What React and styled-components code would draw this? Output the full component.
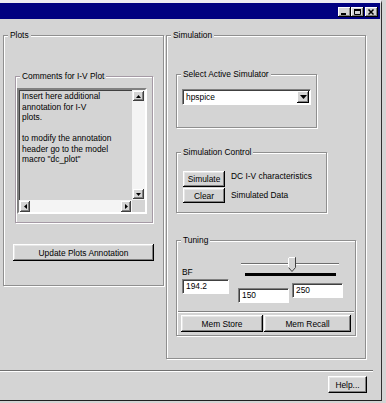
import React from 'react';
import styled, { createGlobalStyle } from 'styled-components';

const GlobalStyle = createGlobalStyle`
  html, body {
    margin: 0;
    padding: 0;
    background: #d4d4d4;
  }
`;

export default function App() {
  return (
    <>
      <GlobalStyle />
      <Window>
        <TitleBar>
          <CaptionButton aria-label="Minimize">
            <svg width="13" height="10" viewBox="0 0 13 10">
              <rect x="3" y="6" width="5" height="2" fill="#000" />
            </svg>
          </CaptionButton>
          <CaptionButton aria-label="Maximize">
            <svg width="13" height="10" viewBox="0 0 13 10">
              <path d="M3.5 2.5h6v5h-6z" fill="none" stroke="#000" />
              <rect x="3" y="2" width="7" height="2" fill="#000" />
            </svg>
          </CaptionButton>
          <CaptionButton aria-label="Close" $gap={1}>
            <svg width="13" height="10" viewBox="0 0 13 10">
              <path d="M3.5 2.5l5 5M8.5 2.5l-5 5" stroke="#000" strokeWidth="1.5" />
            </svg>
          </CaptionButton>
        </TitleBar>

        <Main>
          <Group $w={161} $h={256}>
            <Legend>Plots</Legend>
            <Group $w={138} $h={152} $top={30} $left={11} $tint>
              <Legend>Comments for I-V Plot</Legend>
              <TextBox>
                <Notes>
                  {'Insert here additional\nannotation for I-V\nplots.\n\nto modify the annotation\nheader go to the model\nmacro "dc_plot"'}
                </Notes>
                <VScroll>
                  <ArrowButton dir="up" />
                  <Track />
                  <ArrowButton dir="down" />
                </VScroll>
                <HScroll>
                  <ArrowButton dir="left" />
                  <Track />
                  <ArrowButton dir="right" />
                </HScroll>
                <Corner />
              </TextBox>
            </Group>
            <Button $w={141} $h={17} $top={21} $left={9}>Update Plots Annotation</Button>
          </Group>

          <Group $w={200} $h={329}>
            <Legend>Simulation</Legend>

            <Group $w={141} $h={59} $top={28} $left={9}>
              <Legend>Select Active Simulator</Legend>
              <SelectBox>
                <SelectValue>hpspice</SelectValue>
                <DropButton>
                  <svg width="7" height="4" viewBox="0 0 7 4">
                    <path d="M0 0h7L3.5 4z" fill="#000" />
                  </svg>
                </DropButton>
              </SelectBox>
            </Group>

            <Group $w={151} $h={66} $top={19} $left={9}>
              <Legend>Simulation Control</Legend>
              <ControlRow $top={13}>
                <Button $w={42} $h={16}>Simulate</Button>
                <ControlLabel>DC I-V characteristics</ControlLabel>
              </ControlRow>
              <ControlRow $top={1}>
                <Button $w={42} $h={15}>Clear</Button>
                <ControlLabel $top={2}>Simulated Data</ControlLabel>
              </ControlRow>
            </Group>

            <Group $w={180} $h={101} $top={22} $left={9}>
              <Legend>Tuning</Legend>
              <TuneBody>
                <BFColumn>
                  <FieldLabel>BF</FieldLabel>
                  <TextField $w={47}>194.2</TextField>
                </BFColumn>
                <RangeColumn>
                  <svg width="105" height="22" viewBox="0 0 105 22">
                    <rect x="3" y="8" width="98" height="1" fill="#6e6e6e" />
                    <rect x="3" y="9" width="98" height="1" fill="#ffffff" />
                    <rect x="7" y="18" width="91" height="3" fill="#000" />
                    <path d="M50.5 2.5h7v10l-3.5 4l-3.5-4z" fill="#d4d4d4" stroke="#404040" />
                    <path d="M50.5 12.5v-10h6.5" fill="none" stroke="#fff" />
                  </svg>
                  <RangeRow>
                    <TextField $w={51} $top={5}>150</TextField>
                    <TextField $w={51}>250</TextField>
                  </RangeRow>
                </RangeColumn>
              </TuneBody>
              <Separator />
              <MemRow>
                <Button $w={82} $h={17}>Mem Store</Button>
                <Button $w={87} $h={17}>Mem Recall</Button>
              </MemRow>
            </Group>
          </Group>
        </Main>

        <Divider />
        <Footer>
          <DefaultButton>Help...</DefaultButton>
        </Footer>
      </Window>
    </>
  );
}

function ArrowButton({ dir }) {
  const shapes = {
    up: 'M1 4h5L3.5 1z',
    down: 'M1 1h5L3.5 4z',
    left: 'M4 1v5L1 3.5z',
    right: 'M1 1v5L4 3.5z',
  };
  const vertical = dir === 'up' || dir === 'down';
  return (
    <ScrollButton $vertical={vertical}>
      <svg width={vertical ? 7 : 5} height={vertical ? 5 : 7}>
        <path d={shapes[dir]} fill="#000" />
      </svg>
    </ScrollButton>
  );
}

// Styled Components
const Window = styled.div`
  box-sizing: border-box;
  width: 382px;
  height: 401px;
  display: flex;
  flex-direction: column;
  background: #d4d4d4;
  border-top: 3px solid #ecebf1;
  border-right: 1px solid #303030;
  border-bottom: 1px solid #202020;
  font-family: "Liberation Sans", Arial, sans-serif;
  font-size: 8.4px;
  color: #000;
`;

const TitleBar = styled.div`
  box-sizing: border-box;
  width: 380px;
  height: 16px;
  flex: 0 0 16px;
  display: flex;
  justify-content: flex-end;
  align-items: flex-start;
  padding: 4px 2px 0 0;
  background: #000080;
`;

const CaptionButton = styled.div`
  width: 13px;
  height: 10px;
  margin-left: ${p => p.$gap || 0}px;
  background: #d4d4d4;
  box-shadow: inset -1px -1px 0 #000, inset 1px 1px 0 #fff, inset -2px -2px 0 #808080;
  svg {
    display: block;
  }
`;

const Main = styled.div`
  box-sizing: border-box;
  height: 351px;
  flex: 0 0 351px;
  display: flex;
  align-items: flex-start;
  gap: 2px;
  padding: 11px 0 0 3px;
`;

const Group = styled.fieldset`
  box-sizing: border-box;
  width: ${p => p.$w}px;
  height: ${p => p.$h}px;
  min-width: 0;
  margin: ${p => p.$top || 0}px 0 0 ${p => p.$left || 0}px;
  padding: 0;
  border: 1px solid ${p => (p.$tint ? '#a59aa5' : '#8f8f8f')};
  box-shadow: inset 1px 1px 0 #fff, 1px 1px 0 #fff;
`;

const Legend = styled.legend`
  margin-left: 4px;
  padding: 0 2px;
  line-height: 11px;
  background: #d4d4d4;
`;

const TextBox = styled.div`
  box-sizing: border-box;
  width: 130px;
  height: 126px;
  margin: 6px 0 0 1px;
  display: grid;
  grid-template-columns: 1fr 13px;
  grid-template-rows: 1fr 12px;
  border: 2px solid;
  border-color: #808080 #fff #fff #808080;
  box-shadow: inset 1px 1px 0 #404040, inset -1px -1px 0 #d4d4d4;
`;

const Notes = styled.div`
  padding: 1px 2px 0 3px;
  line-height: 10.5px;
  white-space: pre-line;
  overflow: hidden;
`;

const VScroll = styled.div`
  display: flex;
  flex-direction: column;
  align-items: center;
  background: #f4f4f4;
  padding: 1px 0 1px;
`;

const HScroll = styled.div`
  display: flex;
  align-items: center;
  background: #f4f4f4;
  padding: 0 1px 0 1px;
`;

const Track = styled.div`
  flex: 1;
`;

const Corner = styled.div`
  background: #d4d4d4;
`;

const ScrollButton = styled.div`
  box-sizing: border-box;
  width: ${p => (p.$vertical ? 11 : 10)}px;
  height: ${p => (p.$vertical ? 10 : 11)}px;
  display: flex;
  align-items: center;
  justify-content: center;
  background: #d4d4d4;
  box-shadow: inset -1px -1px 0 #404040, inset 1px 1px 0 #fff, inset -2px -2px 0 #808080;
  svg {
    display: block;
  }
`;

const Button = styled.div`
  box-sizing: border-box;
  width: ${p => p.$w}px;
  height: ${p => p.$h}px;
  margin: ${p => p.$top || 0}px 0 0 ${p => p.$left || 0}px;
  flex: 0 0 auto;
  display: flex;
  align-items: center;
  justify-content: center;
  background: #d4d4d4;
  box-shadow: inset -1px -1px 0 #000, inset 1px 1px 0 #fff, inset -2px -2px 0 #808080, inset 2px 2px 0 #e6e6e6;
  white-space: nowrap;
`;

const DefaultButton = styled.div`
  box-sizing: border-box;
  width: 39px;
  height: 17px;
  display: flex;
  align-items: center;
  justify-content: center;
  background: #d4d4d4;
  border: 1px solid #000;
  border-top-color: #fff;
  border-left-color: #fff;
  box-shadow: inset -1px -1px 0 #808080, inset 1px 1px 0 #e6e6e6;
`;

const SelectBox = styled.div`
  box-sizing: border-box;
  width: 129px;
  height: 16px;
  margin: 9px 0 0 5px;
  display: flex;
  align-items: center;
  background: #fff;
  border: 1px solid;
  border-color: #808080 #fff #fff #808080;
  box-shadow: inset 1px 1px 0 #404040;
  padding: 0 1px 0 3px;
`;

const SelectValue = styled.span`
  flex: 1;
`;

const DropButton = styled.div`
  box-sizing: border-box;
  width: 12px;
  height: 12px;
  display: flex;
  align-items: center;
  justify-content: center;
  background: #d4d4d4;
  box-shadow: inset -1px -1px 0 #000, inset 1px 1px 0 #fff, inset -2px -2px 0 #808080;
  svg {
    display: block;
  }
`;

const ControlRow = styled.div`
  display: flex;
  align-items: flex-start;
  gap: 6px;
  margin: ${p => p.$top}px 0 0 6px;
`;

const ControlLabel = styled.span`
  line-height: 11px;
  margin-top: ${p => p.$top || 0}px;
  white-space: nowrap;
`;

const TuneBody = styled.div`
  height: 65px;
  display: flex;
  align-items: flex-start;
  padding-left: 5px;
`;

const BFColumn = styled.div`
  display: flex;
  flex-direction: column;
  padding-top: 21px;
`;

const FieldLabel = styled.span`
  line-height: 11px;
  margin-bottom: 1px;
`;

const TextField = styled.div`
  box-sizing: border-box;
  width: ${p => p.$w}px;
  height: 15px;
  margin-top: ${p => p.$top || 0}px;
  padding: 1px 3px 0;
  line-height: 11px;
  background: #fff;
  border: 1px solid;
  border-color: #808080 #fff #fff #808080;
  box-shadow: inset 1px 1px 0 #404040;
`;

const RangeColumn = styled.div`
  display: flex;
  flex-direction: column;
  margin: 9px 0 0 9px;
  svg {
    display: block;
  }
`;

const RangeRow = styled.div`
  display: flex;
  align-items: flex-start;
  gap: 3px;
  margin-top: 6px;
`;

const Separator = styled.div`
  margin: 0 1px;
  border-top: 1px solid #808080;
  border-bottom: 1px solid #fff;
`;

const MemRow = styled.div`
  display: flex;
  gap: 1px;
  margin-top: 2px;
  padding-left: 4px;
`;

const Divider = styled.div`
  margin-right: 8px;
  border-top: 1px solid #707070;
  border-bottom: 1px solid #fff;
`;

const Footer = styled.div`
  flex: 1;
  display: flex;
  justify-content: flex-end;
  align-items: flex-start;
  padding: 4px 14px 0 0;
`;
